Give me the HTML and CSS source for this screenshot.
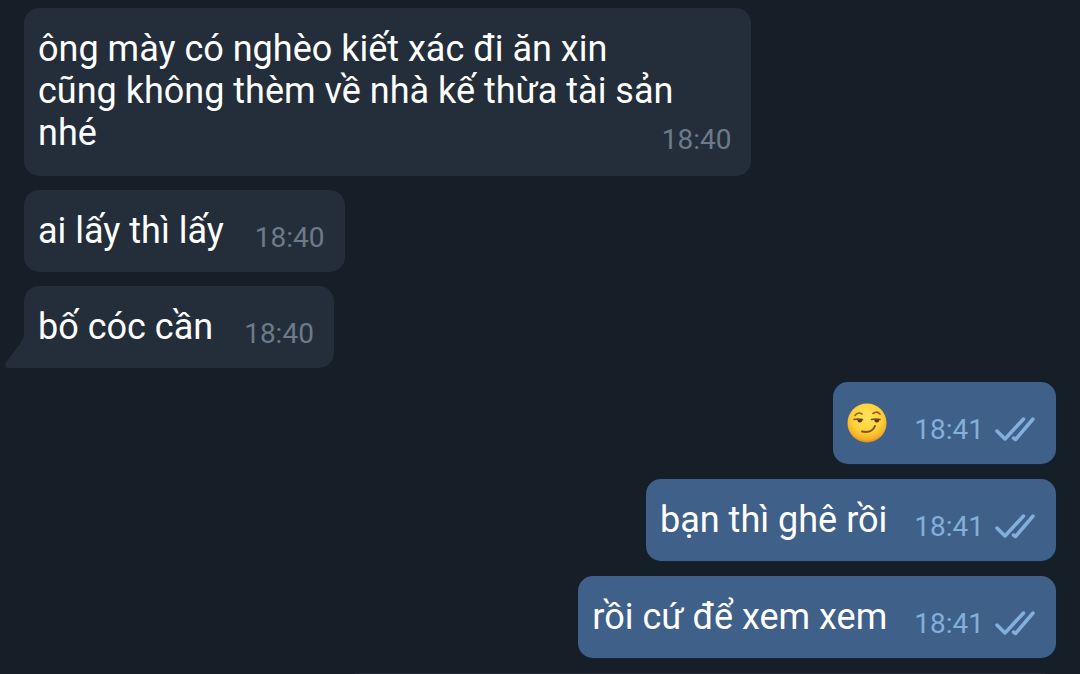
FILE: index.html
```html
<!DOCTYPE html>
<html lang="vi">
<head>
    <meta charset="UTF-8">
    <meta name="viewport" content="width=device-width, initial-scale=1.0">
    <title>Chat</title>
    <link rel="stylesheet" href="styles.css">
</head>
<body>
    <svg class="defs" width="0" height="0">
        <symbol id="read" viewBox="0 0 40 26">
            <path d="M2 14L10 22L28.500 2M18.500 21L20.500 22.500L38 2" fill="none" stroke="currentColor" stroke-width="3.500" stroke-linecap="round" stroke-linejoin="round"/>
        </symbol>
    </svg>

    <main class="chat">
        <section class="group in">
            <div class="bubble long">
                <p class="text">ông mày có nghèo kiết xác đi ăn xin<br>cũng không thèm về nhà kế thừa tài sản<br>nhé</p>
                <div class="meta"><time>18:40</time></div>
            </div>
            <div class="bubble">
                <p class="text">ai lấy thì lấy</p>
                <div class="meta"><time>18:40</time></div>
            </div>
            <div class="bubble last">
                <svg class="tail" viewBox="0 0 20 32" aria-hidden="true">
                    <path d="M20 0C18 6 12 13 3 25C0 29 1 32 5 32H20Z"/>
                </svg>
                <p class="text">bố cóc cần</p>
                <div class="meta"><time>18:40</time></div>
            </div>
        </section>

        <section class="group out">
            <div class="bubble">
                <svg class="emoji" viewBox="0 0 40 42" role="img" aria-label="smirk">
                    <defs>
                        <radialGradient id="face" cx="0.5" cy="0.35" r="0.65">
                            <stop offset="0" stop-color="#ffe45c"/>
                            <stop offset="0.6" stop-color="#fdd03a"/>
                            <stop offset="0.88" stop-color="#f5ae26"/>
                            <stop offset="1" stop-color="#d98a1c"/>
                        </radialGradient>
                    </defs>
                    <circle cx="20" cy="21" r="19.500" fill="url(#face)"/>
                    <g fill="none" stroke-linecap="round">
                        <path d="M8 13.500Q11 9.500 15 12M26 11.500Q30 8.500 33 12" stroke="#93631d" stroke-width="1.600"/>
                        <path d="M7 17.500Q11 16.500 15.500 17.500M24.500 17.500Q29 16.500 33 17.500" stroke="#75501a" stroke-width="1.500"/>
                        <path d="M15 29.500Q25 31.500 28 24" stroke="#80521a" stroke-width="2"/>
                    </g>
                    <path d="M10 17.500H15.500Q15 21 12.500 20.500Q10.500 20 10 17.500ZM27 17.500H32.500Q32 21 29.500 20.500Q27.500 20 27 17.500Z" fill="#51360f"/>
                </svg>
                <div class="meta"><time>18:41</time><svg class="read"><use href="#read"/></svg></div>
            </div>
            <div class="bubble">
                <p class="text">bạn thì ghê rồi</p>
                <div class="meta"><time>18:41</time><svg class="read"><use href="#read"/></svg></div>
            </div>
            <div class="bubble">
                <p class="text">rồi cứ để xem xem</p>
                <div class="meta"><time>18:41</time><svg class="read"><use href="#read"/></svg></div>
            </div>
            <div class="bubble next"></div>
        </section>
    </main>
</body>
</html>
```
FILE: styles.css
```css
* {
    box-sizing: border-box;
}
body {
    margin: 0;
    background: #161e27;
    color: #fff;
    font-family: Roboto, "Noto Sans", sans-serif;
}
.defs {
    position: absolute;
}
.chat {
    display: flex;
    flex-direction: column;
    gap: 14px;
    height: 100vh;
    padding: 8px 24px 0;
    overflow: hidden;
}
.group {
    display: flex;
    flex-direction: column;
    flex-shrink: 0;
}
.in {
    align-items: flex-start;
    gap: 14px;
}
.out {
    align-items: flex-end;
    gap: 15px;
}
.bubble {
    position: relative;
    display: flex;
    align-items: flex-end;
    gap: 31px;
    padding: 20px 20px 20px 14px;
    border-radius: 15px;
    background: #232e3a;
}
.out .bubble {
    gap: 27px;
    padding-right: 21px;
    background: #3f6189;
    box-shadow: 0 1px 1px #14263c;
}
.text {
    margin: 0;
    font-size: 36px;
    line-height: 42px;
    white-space: nowrap;
}
.meta {
    display: flex;
    align-items: center;
    gap: 11px;
    color: #6c7a89;
    font-size: 28px;
    line-height: 28px;
}
.out .meta {
    color: #82afdc;
}
/* time sits in the corner, over the last line */
.long {
    display: grid;
    padding-bottom: 22px;
}
.long .text,
.long .meta {
    grid-area: 1 / 1;
}
.long .text {
    padding-right: 58px;
}
.long .meta {
    align-self: end;
    justify-self: end;
}
.last {
    border-bottom-left-radius: 0;
}
.tail {
    position: absolute;
    right: 100%;
    bottom: 0;
    width: 20px;
    height: 32px;
    fill: #232e3a;
}
.emoji {
    display: block;
    width: 40px;
    height: 42px;
}
.read {
    width: 40px;
    height: 26px;
}
.out .next {
    width: 69%;
    height: 82px;
    background: #232e3a;
}
```
